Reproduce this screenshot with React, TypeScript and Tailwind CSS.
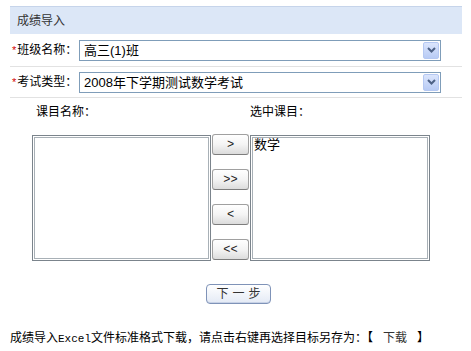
import { useState } from 'react'

const FONT = "font-['Liberation_Sans','Noto_Sans_CJK_SC',sans-serif]"

function Chevron() {
  return (
    <svg width="9" height="6" viewBox="0 0 9 6">
      <path d="M1 1l3.5 3.5L8 1" fill="none" stroke="#4d6185" strokeWidth="2" />
    </svg>
  )
}

function Select({ value }: { value: string }) {
  return (
    <div className="flex items-center w-[362px] h-[21px] border border-[#7f9db9] bg-white pl-[4px] pr-[1px]">
      <span className="flex-1 text-[13px] text-black leading-none">{value}</span>
      <div className="flex items-center justify-center w-[16px] h-[17px] rounded-[2px] border border-[#b5c8f2] bg-gradient-to-b from-[#dbe5fc] to-[#b8cbf5]">
        <Chevron />
      </div>
    </div>
  )
}

function MoveButton({ label }: { label: string }) {
  return (
    <button className="w-[37px] h-[21px] rounded-[3px] border border-[#a0a0a0] border-b-[#7d7d7d] bg-gradient-to-b from-white via-[#f4f4f4] to-[#dcdcdc] text-[12px] leading-none text-[#222] font-['Liberation_Mono',monospace]">
      {label}
    </button>
  )
}

export default function App() {
  const [selected] = useState(['数学'])

  return (
    <div className={`${FONT} w-[471px] h-[351px] bg-white text-[12px] text-black`}>
      <div className="ml-[10px] w-[452px] pt-[6px]">
        {/* Header */}
        <div className="h-[28px] border-t border-[#c6d4ea] bg-[#dce7f7] flex items-center pl-[7px] text-[#333]">
          成绩导入
        </div>

        {/* Form rows */}
        <div className="flex items-center h-[33px] border-b border-[#e2e2e2]">
          <div className="w-[69px] pl-[2px] flex items-center">
            <span className="text-[#d40000] text-[11px] mr-[1px]">*</span>班级名称：
          </div>
          <Select value="高三(1)班" />
        </div>
        <div className="flex items-center h-[31px] border-b border-[#e2e2e2]">
          <div className="w-[69px] pl-[2px] flex items-center">
            <span className="text-[#d40000] text-[11px] mr-[1px]">*</span>考试类型：
          </div>
          <Select value="2008年下学期测试数学考试" />
        </div>

        {/* Subjects */}
        <div className="pl-[22px]">
          <div className="flex pt-[7px] leading-[14px]">
            <div className="w-[179px] pl-[4px]">课目名称：</div>
            <div className="w-[39px]" />
            <div>选中课目：</div>
          </div>
          <div className="flex items-start mt-[15px]">
            <div className="w-[179px] h-[126px] mt-[1px] border border-[#7b848c] bg-white shadow-[inset_0_0_0_1px_#fff,inset_0_0_0_2px_#a8b0b6]" />
            <div className="flex flex-col gap-[14px] ml-[1px] mr-[1px]">
              <MoveButton label=">" />
              <MoveButton label=">>" />
              <MoveButton label="<" />
              <MoveButton label="<<" />
            </div>
            <div className="w-[180px] h-[126px] mt-[1px] border border-[#7b848c] bg-white shadow-[inset_0_0_0_1px_#fff,inset_0_0_0_2px_#a8b0b6] px-[3px] py-[1px]">
              {selected.map(s => (
                <div key={s} className="text-[13px] leading-[15px]">{s}</div>
              ))}
            </div>
          </div>
        </div>

        {/* Next */}
        <div className="mt-[23px] ml-[196px]">
          <button className="w-[65px] h-[20px] rounded-[4px] border border-[#7f93b8] bg-gradient-to-b from-white to-[#e4eaf5] shadow-[inset_0_-1px_0_#c8d2e6] text-[12px] leading-none text-[#333] tracking-[4px] pl-[4px]">
            下一步
          </button>
        </div>

        {/* Footer */}
        <div className="mt-[26px] leading-[16px] whitespace-nowrap">
          成绩导入<span className="font-['Liberation_Mono',monospace] text-[11px]">Excel</span>文件标准格式下载，请点击右键再选择目标另存为：【&nbsp;&nbsp;&nbsp;<span className="text-[#333]">下载</span>&nbsp;&nbsp;&nbsp;】
        </div>
      </div>
    </div>
  )
}
